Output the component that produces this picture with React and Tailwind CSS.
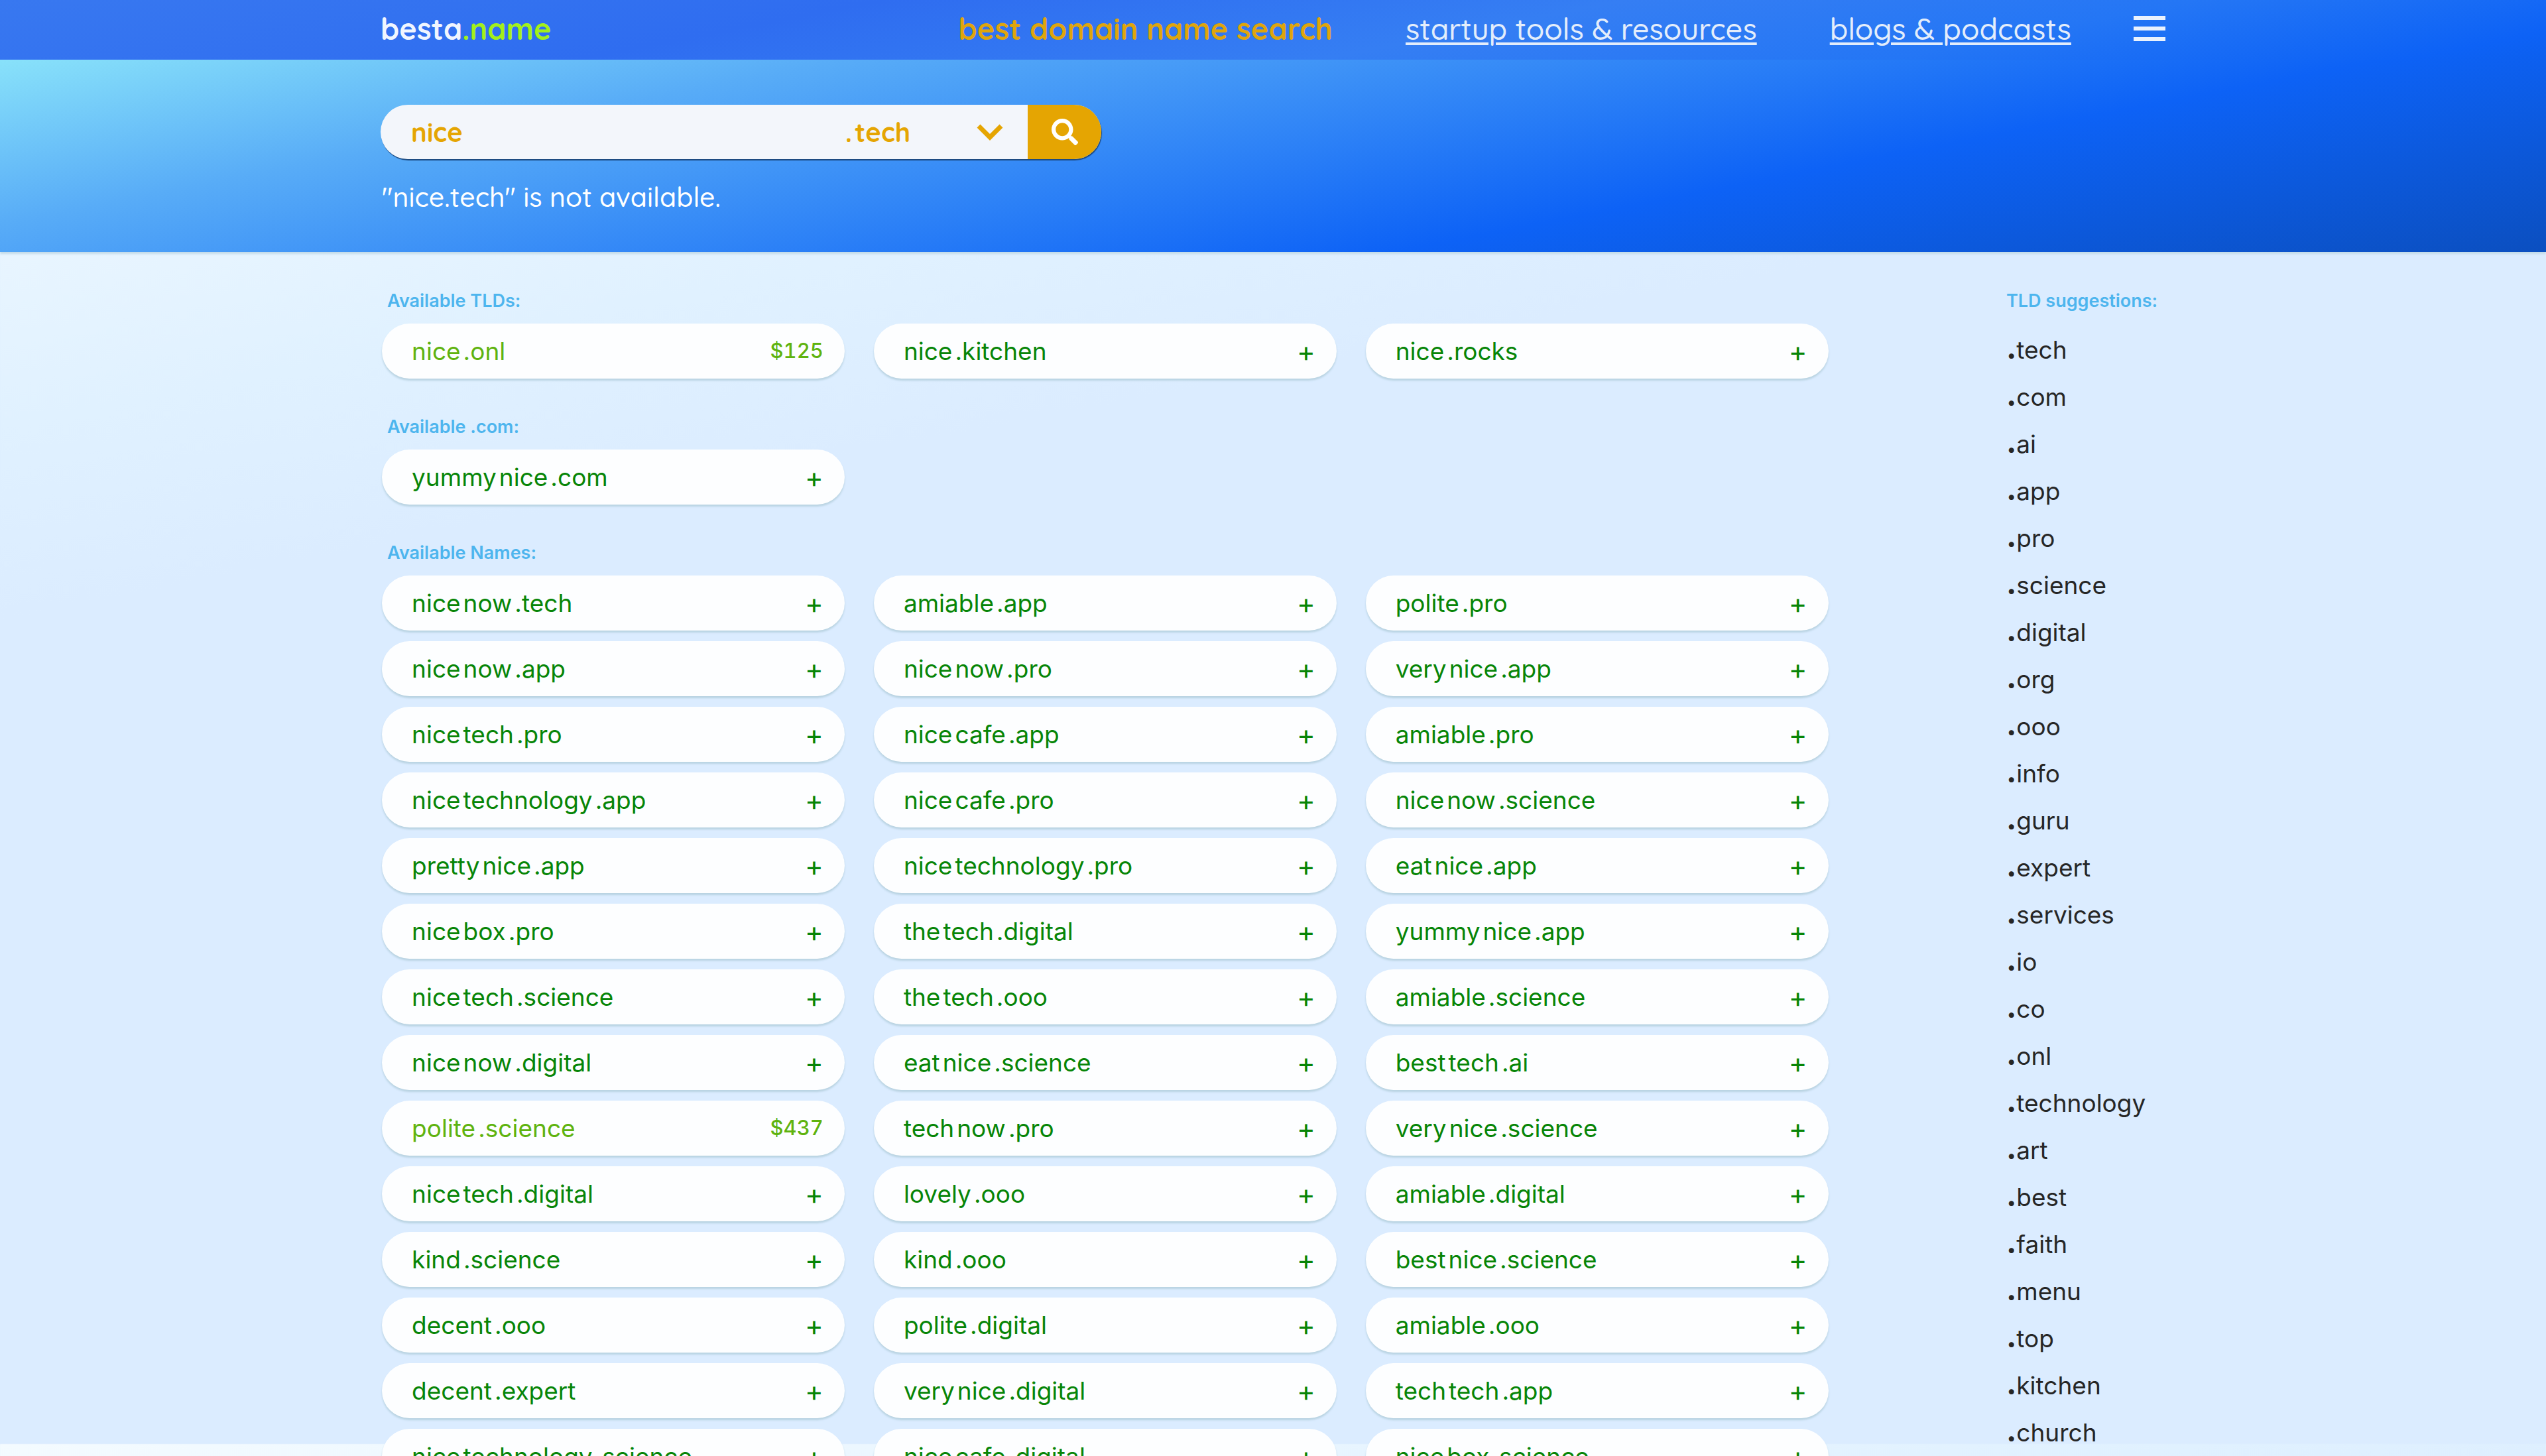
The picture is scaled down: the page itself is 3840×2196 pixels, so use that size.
import { FaSearch } from "react-icons/fa";

const tlds = [
  ["nice", ".onl", "$125"],
  ["nice", ".kitchen"],
  ["nice", ".rocks"],
];

const coms = [["yummy nice", ".com"]];

const names = [
  ["nice now", ".tech"], ["amiable", ".app"], ["polite", ".pro"],
  ["nice now", ".app"], ["nice now", ".pro"], ["very nice", ".app"],
  ["nice tech", ".pro"], ["nice cafe", ".app"], ["amiable", ".pro"],
  ["nice technology", ".app"], ["nice cafe", ".pro"], ["nice now", ".science"],
  ["pretty nice", ".app"], ["nice technology", ".pro"], ["eat nice", ".app"],
  ["nice box", ".pro"], ["the tech", ".digital"], ["yummy nice", ".app"],
  ["nice tech", ".science"], ["the tech", ".ooo"], ["amiable", ".science"],
  ["nice now", ".digital"], ["eat nice", ".science"], ["best tech", ".ai"],
  ["polite", ".science", "$437"], ["tech now", ".pro"], ["very nice", ".science"],
  ["nice tech", ".digital"], ["lovely", ".ooo"], ["amiable", ".digital"],
  ["kind", ".science"], ["kind", ".ooo"], ["best nice", ".science"],
  ["decent", ".ooo"], ["polite", ".digital"], ["amiable", ".ooo"],
  ["decent", ".expert"], ["very nice", ".digital"], ["tech tech", ".app"],
  ["nice technology", ".science"], ["nice cafe", ".digital"], ["nice box", ".science"],
];

const suggestions = [
  "tech", "com", "ai", "app", "pro", "science", "digital", "org", "ooo", "info", "guru", "expert",
  "services", "io", "co", "onl", "technology", "art", "best", "faith", "menu", "top", "kitchen", "church",
];

function Domain({ name, tld, price }) {
  return (
    <li>
      <button
        type="button"
        className={`flex h-[83px] w-full items-center justify-between rounded-full bg-[#fdfeff] pr-8 pl-[45px] shadow-[0_3px_3px_#b9d3e2] ${price ? "text-[#5fb30f]" : "text-[#078507]"}`}
      >
        <span className="flex gap-1 text-[37px] leading-[44px]">
          {name.split(" ").map((word, i) => (
            <span key={i}>{word}</span>
          ))}
          <span>{tld}</span>
        </span>
        {price ? (
          <span className="text-[31px] font-medium tabular-nums">{price}</span>
        ) : (
          <span className="text-[42px] leading-[48px]">+</span>
        )}
      </button>
    </li>
  );
}

function Section({ title, items }) {
  return (
    <section>
      <h2 className="px-2 text-[27px] leading-8 font-semibold text-[#4db5ee]">{title}</h2>
      <ul className="mt-[18px] grid grid-cols-3 gap-x-11 gap-y-4">
        {items.map(([name, tld, price]) => (
          <Domain key={name + tld} name={name} tld={tld} price={price} />
        ))}
      </ul>
    </section>
  );
}

export default function App() {
  return (
    <div className="h-screen overflow-hidden bg-[linear-gradient(169deg,#f4fbff_0%,#e0f1ff_22%,#dbecff_32%,#dbecff_100%)] bg-[length:100%_2178px] font-['Inter',sans-serif]">
      <div className="bg-[linear-gradient(169deg,#9af5fb_0%,#58acf7_30%,#0d62f6_70%,#0b4fc0_100%)] font-['Quicksand','Lato',sans-serif] shadow-[0_3px_3px_#c3dbe8]">
        <header className="h-[90px] bg-[linear-gradient(169deg,#3878f0_0%,#2f6df0_31%,#357ef3_57%,#2476f5_77%,#0d62f6_95%,#0c5fee_100%)] pb-1">
          <div className="mx-auto flex h-full w-[70.1%] items-center justify-between">
            <a href="#" className="text-[45px] leading-[56px] font-bold text-[#f0f6ff]">
              besta<span className="text-[#a3f01a]">.name</span>
            </a>
            <nav className="flex items-center gap-[110px] text-[45px] leading-[56px] text-[#e3edfb]">
              <a href="#" className="font-bold text-[#dfa50c]">best domain name search</a>
              <a href="#" className="font-medium underline decoration-4 underline-offset-4">startup tools &amp; resources</a>
              <a href="#" className="font-medium underline decoration-4 underline-offset-4">blogs &amp; podcasts</a>
              <button type="button" aria-label="Menu" className="-ml-4 flex w-12 flex-col gap-2.5">
                <span className="h-1.5 bg-[#eaf2fd]" />
                <span className="h-1.5 bg-[#eaf2fd]" />
                <span className="h-1.5 bg-[#eaf2fd]" />
              </button>
            </nav>
          </div>
        </header>
        <div className="mx-auto h-[290px] w-[70.1%] pt-[68px]">
          <form className="flex h-[82px] w-[1087px] overflow-hidden rounded-full bg-[#f3f6fb] text-[40px] font-bold text-[#e5a502] shadow-[1px_2px_1px_#1d4a80]">
            <input aria-label="Name" defaultValue="nice" className="w-[701px] min-w-0 bg-transparent pl-[46px] outline-none" />
            <label className="relative flex flex-1 items-center">
              <select aria-label="TLD" className="h-full w-full appearance-none bg-transparent outline-none">
                <option>.&#8202;tech</option>
              </select>
              <svg viewBox="0 0 40 26" className="pointer-events-none absolute right-[37px] h-[26px] w-10" fill="none" stroke="currentColor" strokeWidth="7">
                <path d="M3 4l17 17L37 4" />
              </svg>
            </label>
            <button type="submit" aria-label="Search" className="flex w-[111px] items-center justify-center bg-[#e5a502] text-white">
              <FaSearch size={40} />
            </button>
          </form>
          <p className="mt-8 pl-0.5 text-[41px] leading-[50px] font-medium text-white">"nice.tech" is not available.</p>
        </div>
      </div>
      <main className="mx-auto flex w-[70.1%] justify-between pt-[58px] pl-0.5">
        <div className="flex w-[81.1%] flex-col gap-[57px]">
          <Section title="Available TLDs:" items={tlds} />
          <Section title="Available .com:" items={coms} />
          <Section title="Available Names:" items={names} />
        </div>
        <aside className="w-[240px] whitespace-nowrap">
          <h2 className="text-[27px] leading-8 font-semibold text-[#4db5ee]">TLD suggestions:</h2>
          <ul className="mt-[22px] text-[37px] text-[#262626]">
            {suggestions.map((s) => (
              <li key={s}>
                <a href="#" className="flex h-[71px] items-baseline leading-[71px]">
                  <b className="text-[46px] leading-none">.</b>{s}
                </a>
              </li>
            ))}
          </ul>
        </aside>
      </main>
    </div>
  );
}
